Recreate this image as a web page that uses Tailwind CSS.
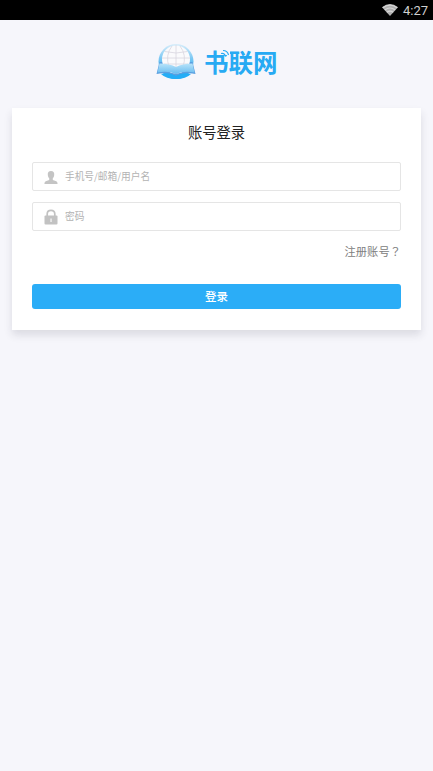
<!DOCTYPE html>
<html lang="zh-CN">
<head>
<meta charset="utf-8">
<meta name="viewport" content="width=device-width, initial-scale=1">
<title>书联网</title>
<script src="https://cdn.jsdelivr.net/npm/@tailwindcss/browser@4"></script>
</head>
<body class="h-[771px] overflow-hidden bg-[#f6f6fb] font-['Noto_Sans_CJK_SC',sans-serif]">
<div class="flex h-5 items-center justify-end gap-[5px] bg-black pr-[5px] font-[Roboto,sans-serif] text-[13px] text-[#cfcfcf]">
  <svg class="h-3 w-4" viewBox="0 0 16 12"><path d="M0 3.200Q8-3 16 3.200L8 12Z" fill="#b0b0b0"/><path d="M.8 3.700Q8-1.500 15.200 3.700M2.800 6Q8 2 13.200 6M4.800 8.300Q8 6 11.200 8.300" fill="none" stroke="#d6d6d6" stroke-width="1.200"/></svg>
  <span class="leading-[21px] pt-px">4:27</span>
</div>
<header class="flex h-[88px] items-start pl-[155px] pt-[23px]">
  <svg class="mt-px h-[38px] w-[42px] shrink-0" viewBox="0 0 42 38">
    <defs><linearGradient id="sky" x1="0" y1="0" x2="0" y2="1"><stop offset="0" stop-color="#d9edfa"/><stop offset=".5" stop-color="#67c0f2"/><stop offset="1" stop-color="#18a8f5"/></linearGradient>
    <linearGradient id="page" x1="0" y1="0" x2="0" y2="1"><stop offset="0" stop-color="#b9e4fa"/><stop offset="1" stop-color="#66bbef"/></linearGradient></defs>
    <circle cx="21" cy="17.500" r="17.500" fill="url(#sky)"/>
    <path d="M4.500 18 1.500 30q10-2 19.500 2 9.500-4 19.500-2l-3-12Z" fill="#5b9fe0"/>
    <circle cx="21" cy="15.500" r="14" fill="#fafafc"/>
    <path d="M21 1v22M7 14h28M9.500 7.500q11.500 3 23 0M9 20h24M17 2q-7 9-3 21M25 2q7 9 3 21" fill="none" stroke="#d8d5df" stroke-width=".8"/>
    <path d="M4.500 19.500Q15 19.500 21 23 27 19.500 37.500 19.500L39.500 28.500Q29 26.500 21 30 13 26.500 2.500 28.500Z" fill="url(#page)"/>
    <path d="M6 30Q15 28 21 32 27 28 36 30 31 35 21 35 11 35 6 30Z" fill="#24adf6"/>
  </svg>
  <div class="relative ml-[7px] mt-[1px] whitespace-nowrap text-[24.500px] font-bold leading-[36px] text-[#27aaf3]">书联网
    <svg class="absolute left-[16px] top-[5px] h-[9px] w-[10px]" viewBox="0 0 10 9"><path d="M0 0h10v9H7V6H0Z" fill="#f6f6fb"/><path d="M1 4.500Q4.500 3.500 5.500 7.500M3 1.500Q7.500 1.500 8.500 6" fill="none" stroke="#27aaf3" stroke-width="1.200"/></svg>
  </div>
</header>
<main class="mx-3 h-[221.500px] bg-white px-5 pt-3 shadow-[0_5px_8px_0_rgba(40,40,60,0.13)]">
  <h1 class="text-center text-[14.300px] leading-6 text-[#222]">账号登录</h1>
  <form>
    <label class="mt-[18px] flex h-[29px] items-center rounded-[2px] border border-[#e5e5e5] pl-[11px]">
      <svg class="mt-[2px] h-[13px] w-[14px]" viewBox="0 0 14 13" fill="#c4c4c4"><path d="M7 0C9.300 0 10.500 1.500 10.200 4 10 6 9.300 6.800 8.800 7.300V9L12.300 10.300Q13.600 10.900 13.600 13H.4Q.4 10.900 1.700 10.300L5.200 9V7.300C4.700 6.800 4 6 3.800 4 3.500 1.500 4.700 0 7 0Z"/></svg>
      <span class="ml-[7px] pb-px text-[9.700px] text-[#b3b3b3]">手机号/邮箱/用户名</span>
    </label>
    <label class="mt-[11px] flex h-[29px] items-center rounded-[2px] border border-[#e5e5e5] pl-[11px]">
      <svg class="mt-[1px] h-4 w-[14px]" viewBox="0 0 14 16"><path d="M3.200 8V5Q3.200 1.300 7 1.300T10.800 5V8" fill="none" stroke="#c2c2c2" stroke-width="1.700"/><rect x=".5" y="6.500" width="13" height="9" rx="1" fill="#c2c2c2"/><path d="M6.300 9.500h1.500v3.500H6.300Z" fill="#eee"/></svg>
      <span class="ml-[7px] pb-px text-[9.700px] text-[#b3b3b3]">密码</span>
    </label>
    <div class="mt-[10px] flex justify-end text-[11.300px] leading-5 text-[#808080]"><span>注册账号</span><span lang="zh-TW" class="font-['Noto_Sans_CJK_TC',sans-serif]">？</span></div>
    <button type="button" class="mt-[23px] block h-[25px] w-full rounded-[3px] bg-[#2badf7] text-[11.500px] font-medium leading-[25px] text-white">登录</button>
  </form>
</main>
</body>
</html>
